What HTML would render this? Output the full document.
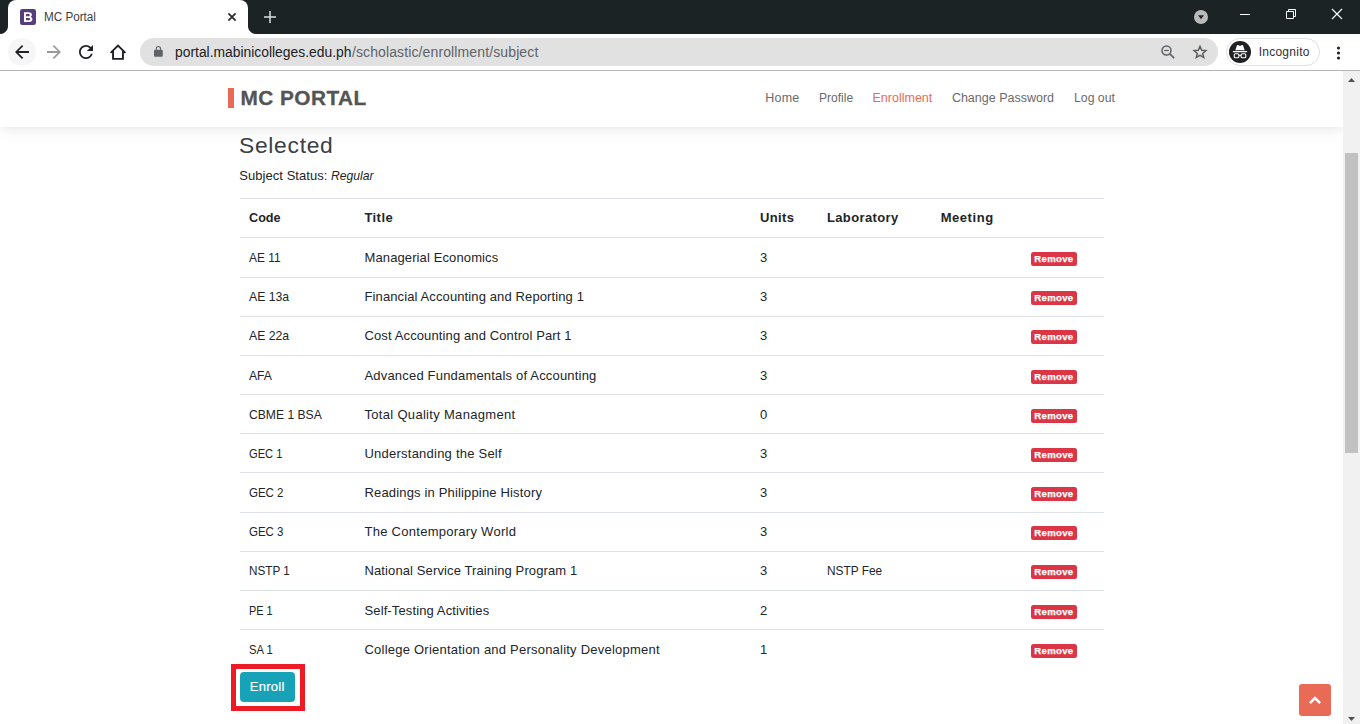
<!DOCTYPE html>
<html><head><meta charset="utf-8"><title>MC Portal</title>
<style>
*{box-sizing:border-box;margin:0;padding:0}
html,body{width:1360px;height:724px;overflow:hidden;background:#fff;font-family:"Liberation Sans",sans-serif}
.abs,.t{position:absolute;white-space:nowrap}
.t{line-height:1;font-weight:normal;font-style:normal;text-decoration:none;display:block}
svg{position:absolute;overflow:visible}
#tabstrip{left:0;top:0;width:1360px;height:34px;background:#1c2325}
#tab{left:8px;top:0;width:240px;height:34px;background:#fff;border-radius:8px 8px 0 0}
#tabl{left:0;top:26px;width:8px;height:8px;background:radial-gradient(circle at 0 0,#1c2325 7.5px,#fff 8.5px)}
#tabr{left:248px;top:26px;width:8px;height:8px;background:radial-gradient(circle at 100% 0,#1c2325 7.5px,#fff 8.5px)}
#toolbar{left:0;top:34px;width:1360px;height:36px;background:#fff}
#tbline{left:0;top:70px;width:1360px;height:1px;background:#b4b4b4}
#backbg{left:8px;top:38px;width:28px;height:28px;border-radius:14px;background:#f6f6f6}
#url{left:140px;top:38px;width:1078px;height:28px;border-radius:14px;background:#e1e1e1}
#chip{left:1226px;top:38px;width:94px;height:28px;border-radius:14px;border:1px solid #dfdfdf;background:#fff}
#chipc{left:1229px;top:41px;width:22px;height:22px;border-radius:11px;background:#202124}
#hdr{left:0;top:71px;width:1343px;height:56px;background:#fff;box-shadow:0 2px 13px rgba(0,0,0,.1);clip-path:inset(0 0 -30px 0)}
#logobar{left:228px;top:88px;width:6px;height:20px;background:#e96b56}
#sb{left:1343px;top:71px;width:17px;height:653px;background:#f1f1f1}
#thumb{left:1345px;top:153px;width:13px;height:300px;background:#c1c1c1}
.row{left:240px;width:864px;height:1px;background:#dee2e6}
.rm{left:1031px;width:46px;height:13.8px;background:#dc3545;border-radius:2.5px}
#redbox{left:231px;top:664px;width:74px;height:47px;border:5px solid #ed1c24}
#enroll{left:240px;top:672px;width:55px;height:30px;background:#17a2b8;border-radius:4px}
#totop{left:1299px;top:684px;width:32px;height:32px;background:#e96b56;border-radius:3px}
</style></head><body>
<div class="abs" id="tabstrip"></div>
<div class="abs" id="tab"></div>
<div class="abs" id="tabl"></div>
<div class="abs" id="tabr"></div>
<div class="abs" id="toolbar"></div>
<div class="abs" id="tbline"></div>
<div class="abs" id="backbg"></div>
<div class="abs" id="url"></div>
<div class="abs" id="chip"></div>
<div class="abs" id="chipc"></div>
<div class="abs" id="redbox"></div>
<div class="abs" id="enroll"></div>
<div class="abs" id="totop"></div>
<div class="abs" id="hdr"></div>
<div class="abs" id="logobar"></div>
<div class="abs" id="sb"></div>
<div class="abs" id="thumb"></div>
<div class="abs row" style="top:198px"></div>
<div class="abs row" style="top:237px"></div>
<div class="abs row" style="top:277px"></div>
<div class="abs row" style="top:316px"></div>
<div class="abs row" style="top:355px"></div>
<div class="abs row" style="top:394px"></div>
<div class="abs row" style="top:433px"></div>
<div class="abs row" style="top:472px"></div>
<div class="abs row" style="top:512px"></div>
<div class="abs row" style="top:551px"></div>
<div class="abs row" style="top:590px"></div>
<div class="abs row" style="top:629px"></div>
<div class="abs rm" style="top:252px"></div>
<div class="abs rm" style="top:291px"></div>
<div class="abs rm" style="top:330px"></div>
<div class="abs rm" style="top:370px"></div>
<div class="abs rm" style="top:409px"></div>
<div class="abs rm" style="top:448px"></div>
<div class="abs rm" style="top:487px"></div>
<div class="abs rm" style="top:526px"></div>
<div class="abs rm" style="top:565px"></div>
<div class="abs rm" style="top:605px"></div>
<div class="abs rm" style="top:644px"></div>
<!-- favicon -->
<svg style="left:20px;top:9px" width="16" height="16" viewBox="0 0 16 16"><rect width="16" height="16" rx="2.3" fill="#563d7c"/><path d="M4 3.200h4.700c2.100 0 3.200 1.050 3.200 2.600 0 1-.5 1.750-1.350 2.100 1.150.3 1.850 1.200 1.850 2.400 0 1.700-1.300 2.800-3.400 2.800H4zM6 5.100v2.100h2.300c.9 0 1.400-.4 1.400-1.050S9.200 5.100 8.300 5.100zm0 3.900v2.200h2.700c1 0 1.550-.4 1.550-1.100S9.700 9 8.700 9z" fill="#fff" fill-rule="evenodd"/></svg>
<!-- tab close -->
<svg style="left:228px;top:13px" width="8" height="8" viewBox="0 0 8 8"><path d="M.4 .4l7.200 7.200M7.600 .4L.4 7.600" stroke="#26282b" stroke-width="1.700" fill="none"/></svg>
<!-- new tab plus -->
<svg style="left:264px;top:11px" width="12" height="12" viewBox="0 0 12 12"><path d="M6 0v12M0 6h12" stroke="#dcdfe2" stroke-width="1.500" fill="none"/></svg>
<!-- back -->
<svg style="left:15px;top:45px" width="14" height="14" viewBox="0 0 14 14"><path d="M14 6.100H3.400l4.850-4.850L7 0 0 7l7 7 1.250-1.250L3.400 7.900H14z" fill="#202124"/></svg>
<!-- forward -->
<svg style="left:47px;top:45px" width="14" height="14" viewBox="0 0 14 14"><path d="M0 6.100h10.600L5.750 1.250 7 0l7 7-7 7-1.250-1.250L10.600 7.900H0z" fill="#9a9a9a"/></svg>
<!-- reload -->
<svg style="left:79px;top:45px" width="14" height="14" viewBox="0 0 14 14"><path d="M11.950 2.050A6.960 6.960 0 0 0 7 0a7 7 0 1 0 6.750 8.750h-1.830A5.240 5.240 0 0 1 7 12.250 5.250 5.250 0 1 1 7 1.750c1.450 0 2.750.6 3.700 1.550L7.880 6.120H14V0z" fill="#202124"/></svg>
<!-- home -->
<svg style="left:110px;top:44px" width="16" height="16" viewBox="0 0 16 16"><path d="M.6 8.900L8 1.500l7.400 7.400" stroke="#202124" stroke-width="1.900" fill="none" stroke-linejoin="miter"/><path d="M3.050 6.800v8.050h9.900V6.800" stroke="#202124" stroke-width="1.900" fill="none" stroke-linejoin="miter"/></svg>
<!-- lock -->
<svg style="left:153.700px;top:45.800px" width="8.800" height="10.800" viewBox="0 0 9 11"><path d="M7.700 3.800h-.5V2.700a2.700 2.700 0 0 0-5.400 0v1.100h-.5C.6 3.800 0 4.400 0 5.100v4.600C0 10.400.6 11 1.300 11h6.400c.7 0 1.300-.6 1.300-1.300V5.100c0-.7-.6-1.300-1.300-1.300zM2.900 2.700a1.600 1.600 0 0 1 3.200 0v1.100H2.900z" fill="#5f6368"/></svg>
<!-- zoom out -->
<svg style="left:1161px;top:45px" width="14" height="14" viewBox="0 0 14 14"><circle cx="5.500" cy="5.500" r="4.500" stroke="#5f6368" stroke-width="1.500" fill="none"/><path d="M3.200 5.500h4.600" stroke="#5f6368" stroke-width="1.300"/><path d="M8.800 8.800l4.400 4.400" stroke="#5f6368" stroke-width="1.700"/></svg>
<!-- star -->
<svg style="left:1193px;top:45px" width="14" height="14" viewBox="0 0 14 14"><path d="M7 1.300l1.700 3.900 4.200.4-3.200 2.800 1 4.100L7 10.300l-3.700 2.200 1-4.100L1.100 5.600l4.200-.4z" stroke="#5c5e62" stroke-width="1.500" fill="none" stroke-linejoin="miter"/></svg>
<!-- incognito glyph -->
<svg style="left:1229px;top:41px" width="22" height="22" viewBox="0 0 22 22"><path d="M7.900 4.600L6.300 9.300h9.400l-1.600-4.700c-.15-.45-.65-.7-1.100-.5L11 4.900 9 4.100c-.45-.2-.95.050-1.100.5zM3.900 10.100h14.200v1.100H3.900z" fill="#fff"/><rect x="5.200" y="12.800" width="4.700" height="3.900" rx="1.300" stroke="#fff" stroke-width="1.100" fill="none"/><rect x="12.100" y="12.800" width="4.700" height="3.900" rx="1.300" stroke="#fff" stroke-width="1.100" fill="none"/><path d="M9.900 14.300h2.200" stroke="#fff" stroke-width="1" fill="none"/></svg>
<!-- menu dots -->
<svg style="left:1336.100px;top:45.500px" width="5" height="14" viewBox="0 0 5 14"><circle cx="2.500" cy="2" r="1.550" fill="#202124"/><circle cx="2.500" cy="7" r="1.550" fill="#202124"/><circle cx="2.500" cy="12" r="1.550" fill="#202124"/></svg>
<!-- tab search circle -->
<svg style="left:1194px;top:10px" width="14" height="14" viewBox="0 0 14 14"><circle cx="7" cy="7" r="7" fill="#bababa"/><path d="M4.100 5.300h5.800L7 9.300z" fill="#1c2325"/></svg>
<!-- window controls -->
<svg style="left:1240px;top:14px" width="10" height="1" viewBox="0 0 10 1"><path d="M0 .5h10" stroke="#fff" stroke-width="1"/></svg>
<svg style="left:1286px;top:9px" width="10" height="10" viewBox="0 0 10 10"><path d="M.5 2.500h7v7h-7zM2.500 2.500v-2h7v7h-2" stroke="#fff" stroke-width="1" fill="none"/></svg>
<svg style="left:1332px;top:9px" width="10" height="10" viewBox="0 0 10 10"><path d="M0 0l10 10M10 0L0 10" stroke="#fff" stroke-width="1.200" fill="none"/></svg>
<!-- scroll arrows -->
<svg style="left:1348px;top:78px" width="7" height="4" viewBox="0 0 7 4"><path d="M0 4L3.500 0 7 4z" fill="#505050"/></svg>
<svg style="left:1348px;top:717px" width="7" height="4" viewBox="0 0 7 4"><path d="M0 0l3.500 4L7 0z" fill="#505050"/></svg>
<!-- back to top chevron -->
<svg style="left:1309px;top:696px" width="12" height="8" viewBox="0 0 12 8"><path d="M.9 7.100L6 2l5.100 5.100" stroke="#fff" stroke-width="2.600" fill="none"/></svg>

<div class="t" style="left:44.4px;top:11.1px;font-size:12px;color:#3c4043;transform-origin:0 0;transform:scaleX(0.9729);">MC Portal</div>
<div class="t" style="left:174.6px;top:44.7px;font-size:14px;color:#202124;transform-origin:0 0;transform:scaleX(0.9897);">portal.mabinicolleges.edu.ph</div>
<div class="t" style="left:351.9px;top:44.7px;font-size:14px;color:#5f6368;letter-spacing:0.122px;">/scholastic/enrollment/subject</div>
<div class="t" style="left:1258.7px;top:45.9px;font-size:12px;color:#303236;letter-spacing:0.250px;">Incognito</div>
<h1 class="t" style="left:240.5px;top:88.1px;font-size:20.8px;color:#545454;font-weight:bold;letter-spacing:0.465px;-webkit-text-stroke:0.3px #545454;">MC PORTAL</h1>
<a class="t" style="left:765.2px;top:91.8px;font-size:12.5px;color:#6a6a6a;letter-spacing:0.252px;">Home</a>
<a class="t" style="left:818.9px;top:91.8px;font-size:12.5px;color:#6a6a6a;transform-origin:0 0;transform:scaleX(0.9651);">Profile</a>
<a class="t" style="left:872.5px;top:91.8px;font-size:12.5px;color:#e96b56;letter-spacing:0.006px;">Enrollment</a>
<a class="t" style="left:951.9px;top:91.8px;font-size:12.5px;color:#6a6a6a;">Change Password</a>
<a class="t" style="left:1074.3px;top:91.8px;font-size:12.5px;color:#6a6a6a;transform-origin:0 0;transform:scaleX(0.9804);">Log out</a>
<h3 class="t" style="left:239.2px;top:135.7px;font-size:21.5px;color:#3a4046;letter-spacing:0.687px;transform-origin:0 0;transform:scaleX(1.06);">Selected</h3>
<div class="t" style="left:239.3px;top:168.6px;font-size:13px;color:#212529;letter-spacing:0.046px;">Subject Status:</div>
<em class="t" style="left:331.1px;top:168.6px;font-size:13px;color:#212529;font-style:italic;transform-origin:0 0;transform:scaleX(0.9334);">Regular</em>
<b class="t" style="left:249.2px;top:211.0px;font-size:13px;color:#212529;font-weight:bold;transform-origin:0 0;transform:scaleX(0.9723);">Code</b>
<b class="t" style="left:364.4px;top:211.0px;font-size:13px;color:#212529;font-weight:bold;letter-spacing:0.450px;">Title</b>
<b class="t" style="left:759.9px;top:211.0px;font-size:13px;color:#212529;font-weight:bold;letter-spacing:0.400px;">Units</b>
<b class="t" style="left:826.9px;top:211.0px;font-size:13px;color:#212529;font-weight:bold;letter-spacing:0.388px;">Laboratory</b>
<b class="t" style="left:940.7px;top:211.0px;font-size:13px;color:#212529;font-weight:bold;letter-spacing:0.546px;">Meeting</b>
<div class="t" style="left:249.0px;top:251.1px;font-size:13px;color:#212529;transform-origin:0 0;transform:scaleX(0.9172);">AE 11</div>
<div class="t" style="left:364.5px;top:251.1px;font-size:13px;color:#212529;letter-spacing:0.115px;">Managerial Economics</div>
<div class="t" style="left:759.9px;top:251.1px;font-size:13px;color:#212529;">3</div>
<a class="t" style="left:1034.3px;top:253.7px;font-size:9.6px;color:#fff;font-weight:bold;letter-spacing:0.314px;-webkit-text-stroke:0.25px #fff;">Remove</a>
<div class="t" style="left:249.0px;top:290.1px;font-size:13px;color:#212529;transform-origin:0 0;transform:scaleX(0.9424);">AE 13a</div>
<div class="t" style="left:364.5px;top:290.1px;font-size:13px;color:#212529;letter-spacing:0.115px;">Financial Accounting and Reporting 1</div>
<div class="t" style="left:759.9px;top:290.1px;font-size:13px;color:#212529;">3</div>
<a class="t" style="left:1034.3px;top:292.7px;font-size:9.6px;color:#fff;font-weight:bold;letter-spacing:0.314px;-webkit-text-stroke:0.25px #fff;">Remove</a>
<div class="t" style="left:249.0px;top:329.1px;font-size:13px;color:#212529;transform-origin:0 0;transform:scaleX(0.9424);">AE 22a</div>
<div class="t" style="left:364.5px;top:329.1px;font-size:13px;color:#212529;letter-spacing:0.119px;">Cost Accounting and Control Part 1</div>
<div class="t" style="left:759.9px;top:329.1px;font-size:13px;color:#212529;">3</div>
<a class="t" style="left:1034.3px;top:331.7px;font-size:9.6px;color:#fff;font-weight:bold;letter-spacing:0.314px;-webkit-text-stroke:0.25px #fff;">Remove</a>
<div class="t" style="left:249.0px;top:369.1px;font-size:13px;color:#212529;transform-origin:0 0;transform:scaleX(0.9358);">AFA</div>
<div class="t" style="left:364.5px;top:369.1px;font-size:13px;color:#212529;letter-spacing:0.186px;">Advanced Fundamentals of Accounting</div>
<div class="t" style="left:759.9px;top:369.1px;font-size:13px;color:#212529;">3</div>
<a class="t" style="left:1034.3px;top:371.7px;font-size:9.6px;color:#fff;font-weight:bold;letter-spacing:0.314px;-webkit-text-stroke:0.25px #fff;">Remove</a>
<div class="t" style="left:249.0px;top:408.1px;font-size:13px;color:#212529;transform-origin:0 0;transform:scaleX(0.9330);">CBME 1 BSA</div>
<div class="t" style="left:364.5px;top:408.1px;font-size:13px;color:#212529;letter-spacing:0.309px;">Total Quality Managment</div>
<div class="t" style="left:759.9px;top:408.1px;font-size:13px;color:#212529;">0</div>
<a class="t" style="left:1034.3px;top:410.7px;font-size:9.6px;color:#fff;font-weight:bold;letter-spacing:0.314px;-webkit-text-stroke:0.25px #fff;">Remove</a>
<div class="t" style="left:249.0px;top:447.1px;font-size:13px;color:#212529;transform-origin:0 0;transform:scaleX(0.8561);">GEC 1</div>
<div class="t" style="left:364.5px;top:447.1px;font-size:13px;color:#212529;letter-spacing:0.230px;">Understanding the Self</div>
<div class="t" style="left:759.9px;top:447.1px;font-size:13px;color:#212529;">3</div>
<a class="t" style="left:1034.3px;top:449.7px;font-size:9.6px;color:#fff;font-weight:bold;letter-spacing:0.314px;-webkit-text-stroke:0.25px #fff;">Remove</a>
<div class="t" style="left:249.0px;top:486.1px;font-size:13px;color:#212529;transform-origin:0 0;transform:scaleX(0.8843);">GEC 2</div>
<div class="t" style="left:364.5px;top:486.1px;font-size:13px;color:#212529;letter-spacing:0.162px;">Readings in Philippine History</div>
<div class="t" style="left:759.9px;top:486.1px;font-size:13px;color:#212529;">3</div>
<a class="t" style="left:1034.3px;top:488.7px;font-size:9.6px;color:#fff;font-weight:bold;letter-spacing:0.314px;-webkit-text-stroke:0.25px #fff;">Remove</a>
<div class="t" style="left:249.0px;top:525.1px;font-size:13px;color:#212529;transform-origin:0 0;transform:scaleX(0.8843);">GEC 3</div>
<div class="t" style="left:364.5px;top:525.1px;font-size:13px;color:#212529;letter-spacing:0.271px;">The Contemporary World</div>
<div class="t" style="left:759.9px;top:525.1px;font-size:13px;color:#212529;">3</div>
<a class="t" style="left:1034.3px;top:527.7px;font-size:9.6px;color:#fff;font-weight:bold;letter-spacing:0.314px;-webkit-text-stroke:0.25px #fff;">Remove</a>
<div class="t" style="left:249.0px;top:564.1px;font-size:13px;color:#212529;transform-origin:0 0;transform:scaleX(0.9010);">NSTP 1</div>
<div class="t" style="left:364.5px;top:564.1px;font-size:13px;color:#212529;letter-spacing:0.114px;">National Service Training Program 1</div>
<div class="t" style="left:759.9px;top:564.1px;font-size:13px;color:#212529;">3</div>
<div class="t" style="left:827.2px;top:564.1px;font-size:13px;color:#212529;transform-origin:0 0;transform:scaleX(0.9114);">NSTP Fee</div>
<a class="t" style="left:1034.3px;top:566.7px;font-size:9.6px;color:#fff;font-weight:bold;letter-spacing:0.314px;-webkit-text-stroke:0.25px #fff;">Remove</a>
<div class="t" style="left:249.0px;top:604.1px;font-size:13px;color:#212529;transform-origin:0 0;transform:scaleX(0.8408);">PE 1</div>
<div class="t" style="left:364.5px;top:604.1px;font-size:13px;color:#212529;letter-spacing:0.118px;">Self-Testing Activities</div>
<div class="t" style="left:759.9px;top:604.1px;font-size:13px;color:#212529;">2</div>
<a class="t" style="left:1034.3px;top:606.7px;font-size:9.6px;color:#fff;font-weight:bold;letter-spacing:0.314px;-webkit-text-stroke:0.25px #fff;">Remove</a>
<div class="t" style="left:249.0px;top:643.1px;font-size:13px;color:#212529;transform-origin:0 0;transform:scaleX(0.8628);">SA 1</div>
<div class="t" style="left:364.5px;top:643.1px;font-size:13px;color:#212529;letter-spacing:0.224px;">College Orientation and Personality Development</div>
<div class="t" style="left:759.9px;top:643.1px;font-size:13px;color:#212529;">1</div>
<a class="t" style="left:1034.3px;top:645.7px;font-size:9.6px;color:#fff;font-weight:bold;letter-spacing:0.314px;-webkit-text-stroke:0.25px #fff;">Remove</a>
<span class="t" style="left:249.8px;top:679.6px;font-size:13px;color:#fff;letter-spacing:0.270px;-webkit-text-stroke:0.2px #fff;">Enroll</span>
</body></html>
